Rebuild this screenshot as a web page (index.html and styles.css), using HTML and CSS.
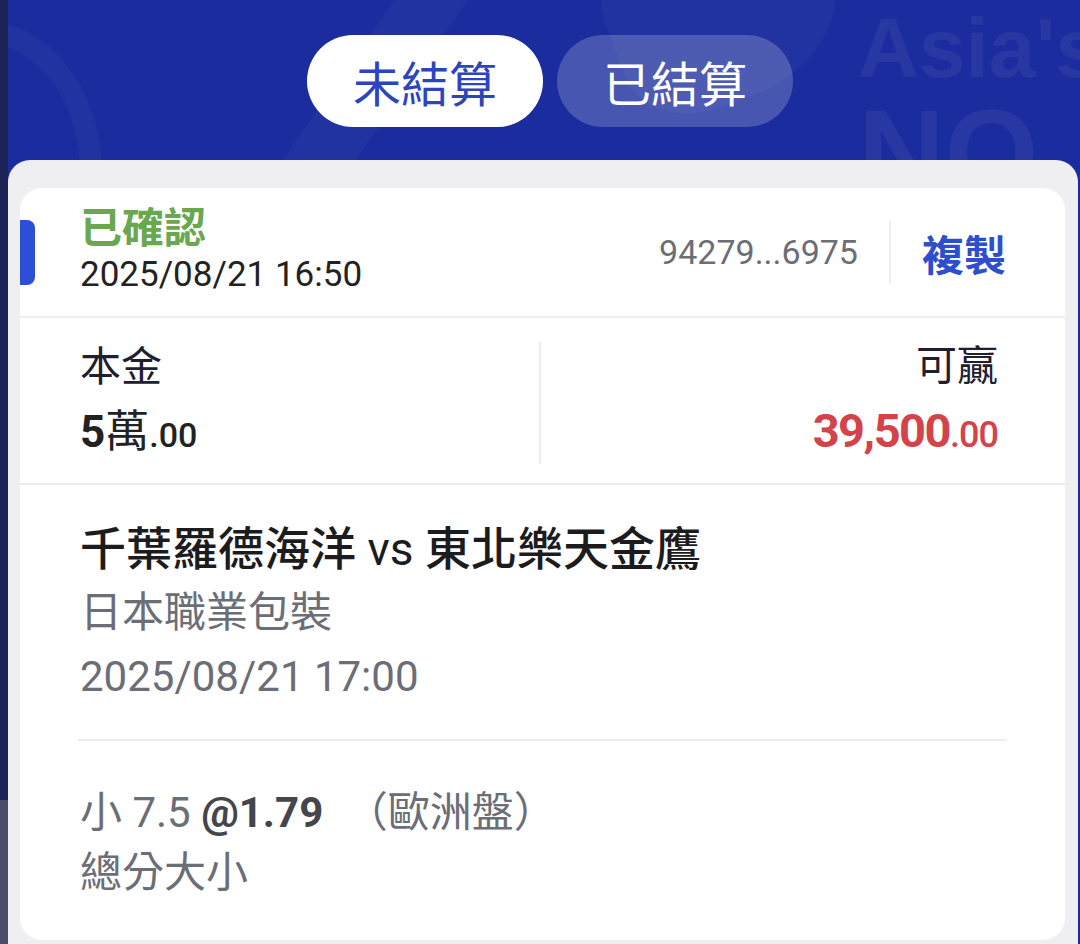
FILE: index.html
```html
<!DOCTYPE html>
<html lang="zh-Hant">
<head>
  <meta charset="UTF-8" />
  <meta name="viewport" content="width=device-width, initial-scale=1.0" />
  <title>注單</title>
  <link rel="stylesheet" href="styles.css">
</head>
<body>
  <div class="sheet">
    <div class="banner">
      <div class="deco deco-ring"></div>
      <div class="deco deco-band"></div>
      <div class="deco deco-blob"></div>
      <div class="watermark"><span class="wm-top">Asia's</span><span class="wm-bottom">NO</span></div>
      <div class="tabs">
        <div class="tab active">未結算</div>
        <div class="tab">已結算</div>
      </div>
    </div>

    <div class="panel">
      <div class="card">
        <div class="marker"></div>

        <div class="card-head">
          <div>
            <div class="status">已確認</div>
            <div class="placed">2025/08/21 16:50</div>
          </div>
          <div class="ticket">
            <span class="ticket-id">94279...6975</span>
            <span class="sep"></span>
            <span class="copy">複製</span>
          </div>
        </div>

        <div class="amounts">
          <div class="amount">
            <div class="label">本金</div>
            <div class="value">5<span class="unit">萬</span><small>.00</small></div>
          </div>
          <div class="amount right">
            <div class="label">可贏</div>
            <div class="value win">39,500<small>.00</small></div>
          </div>
        </div>

        <div class="match">
          <div class="teams">千葉羅德海洋 <span class="vs">vs</span> 東北樂天金鷹</div>
          <div class="sub">日本職業包裝</div>
          <div class="sub">2025/08/21 17:00</div>
        </div>

        <div class="line"></div>

        <div class="bet">
          <div class="sub">小 7.5 <b>@1.79</b> <span class="market">（歐洲盤）</span></div>
          <div class="sub">總分大小</div>
        </div>
      </div>
    </div>
  </div>
</body>
</html>
```

FILE: styles.css
```css
body {
  margin: 0;
  height: 944px;
  overflow: hidden;
  font-family: Roboto, "Noto Sans CJK TC", "Noto Sans", sans-serif;
  background: linear-gradient(to bottom, #1d2257 0, #1d2257 800px, #4b4b68 800px);
}
.sheet {
  margin-left: 8px;
  height: 944px;
  background: #1a2c9e;
  position: relative;
  overflow: hidden;
}
.banner {
  height: 160px;
  position: relative;
}
.deco {
  position: absolute;
  pointer-events: none;
}
.deco-ring {
  left: -150px;
  top: 20px;
  width: 200px;
  height: 260px;
  border-radius: 50%;
  border: 22px solid rgba(255, 255, 255, 0.03);
}
.deco-band {
  left: 330px;
  top: -60px;
  width: 60px;
  height: 300px;
  background: rgba(255, 255, 255, 0.03);
  transform: rotate(35deg);
}
.deco-blob {
  left: 600px;
  top: -80px;
  width: 230px;
  height: 180px;
  border-radius: 40% 60% 60% 40%;
  background: rgba(255, 255, 255, 0.03);
  transform: rotate(-20deg);
}
.watermark {
  position: absolute;
  left: 850px;
  top: 8px;
  width: 222px;
  overflow: hidden;
  font-family: "Liberation Sans", sans-serif;
  font-weight: 700;
  color: rgba(255, 255, 255, 0.06);
  white-space: nowrap;
}
.wm-top {
  display: block;
  font-size: 84px;
  line-height: 80px;
}
.wm-bottom {
  display: block;
  margin-top: 8px;
  font-size: 120px;
  line-height: 112px;
}
.tabs {
  position: relative;
  display: flex;
  justify-content: center;
  gap: 14px;
  padding: 35px 0 0 12px;
}
.tab {
  width: 236px;
  height: 92px;
  border-radius: 46px;
  display: flex;
  align-items: center;
  justify-content: center;
  font-size: 48px;
  color: #fff;
  background: rgba(255, 255, 255, 0.2);
}
.tab.active {
  background: #fff;
  color: #2c45bf;
}

.panel {
  position: relative;
  background: #efeff1;
  border-radius: 22px 22px 0 0;
  margin-right: 2px;
  padding: 28px 13px 0 12px;
  height: 800px;
}
.card {
  position: relative;
  background: #fff;
  border-radius: 22px;
  height: 752px;
}
.marker {
  position: absolute;
  left: 0;
  top: 32px;
  width: 15px;
  height: 65px;
  background: #2d4fd8;
  border-radius: 0 8px 8px 0;
}

.card-head {
  display: flex;
  justify-content: space-between;
  align-items: center;
  padding: 18px 59px 18px 60px;
  border-bottom: 2px solid #eeeef0;
}
.status {
  font-size: 42px;
  line-height: 46px;
  font-weight: 700;
  color: #6aa84f;
}
.placed {
  font-size: 35px;
  line-height: 46px;
  color: #222;
}
.ticket {
  display: flex;
  align-items: center;
  gap: 31px;
}
.ticket-id {
  font-size: 34px;
  color: #6c6e74;
}
.sep {
  width: 2px;
  height: 63px;
  background: #eeeef0;
}
.copy {
  font-size: 42px;
  font-weight: 700;
  color: #2d4fcc;
}

.amounts {
  display: grid;
  grid-template-columns: 1fr 1fr;
  padding: 24px 67px 19px 60px;
  border-bottom: 2px solid #eeeef0;
}
.amount {
  display: flex;
  flex-direction: column;
  justify-content: center;
  gap: 10px;
  height: 122px;
}
.amount.right {
  align-items: flex-end;
  border-left: 2px solid #eeeef0;
}
.label {
  font-size: 41px;
  line-height: 50px;
  color: #1e2030;
}
.value {
  font-size: 44px;
  line-height: 60px;
  font-weight: 700;
  color: #222;
}
.value .unit {
  font-weight: 400;
}
.value small {
  font-size: 34px;
  font-weight: 500;
}
.value.win {
  font-size: 47px;
  letter-spacing: -1.5px;
  color: #d4424a;
}
.value.win small {
  font-size: 36px;
  letter-spacing: -1px;
}

.match {
  padding: 32px 60px 30px;
}
.teams {
  font-size: 46px;
  line-height: 64px;
  font-weight: 500;
  color: #1c1c1e;
}
.vs {
  font-weight: 400;
}
.sub {
  font-size: 42px;
  line-height: 64px;
  color: #6b6e76;
}
.line {
  height: 2px;
  margin: 0 58px;
  background: #eeeef0;
}
.bet {
  padding: 42px 60px 0;
}
.bet .sub {
  line-height: 60px;
}
.bet b {
  color: #44464c;
}
.market {
  margin-left: 12px;
}
```
